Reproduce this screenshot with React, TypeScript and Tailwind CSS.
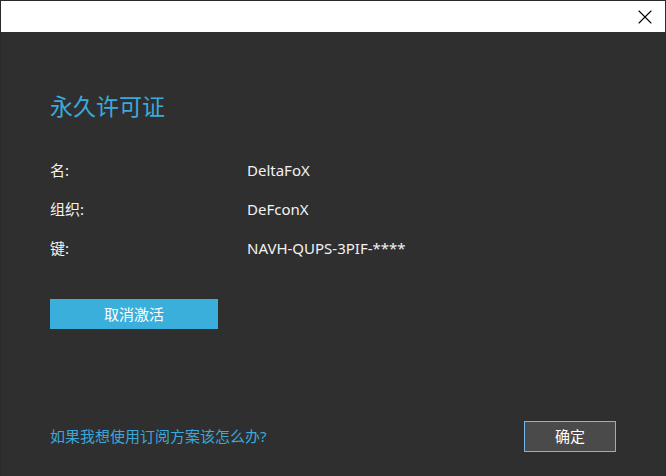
import { X } from "lucide-react";

const rows: [string, string][] = [
  ["名:", "DeltaFoX"],
  ["组织:", "DeFconX"],
  ["键:", "NAVH-QUPS-3PIF-****"],
];

const font = { fontFamily: '"Noto Sans", "Noto Sans CJK SC", sans-serif' };

export default function App() {
  return (
    <div
      className="flex h-[476px] w-[666px] flex-col border-x border-t border-[#2a2a2a] bg-[#2f2f2f] text-[15px] text-[#f2f2f2]"
      style={font}
    >
      {/* title bar */}
      <div className="flex h-[31px] shrink-0 items-center justify-end bg-white pr-[8px]">
        <X className="h-[24px] w-[24px] text-black" strokeWidth={1.1} />
      </div>

      <div className="flex flex-1 flex-col pl-[49px] pr-[49px]">
        <h1 className="mt-[59px] text-[23px] leading-[30px] text-[#3ba9dc]">永久许可证</h1>

        <div className="mt-[39px] flex flex-col">
          {rows.map(([k, v]) => (
            <div key={k} className="flex h-[39px] items-start leading-[20px]">
              <span className="w-[197px]">{k}</span>
              <span>{v}</span>
            </div>
          ))}
        </div>

        <button className="mt-[22px] h-[30px] w-[168px] bg-[#3aafdc] text-[15px] text-white">
          取消激活
        </button>

        <div className="mt-auto mb-[24px] flex items-center justify-between">
          <span className="text-[#3aa8dc]">如果我想使用订阅方案该怎么办?</span>
          <button className="h-[31px] w-[92px] border border-[#74b6ee] bg-[#4a4a4a] text-white">
            确定
          </button>
        </div>
      </div>
    </div>
  );
}
